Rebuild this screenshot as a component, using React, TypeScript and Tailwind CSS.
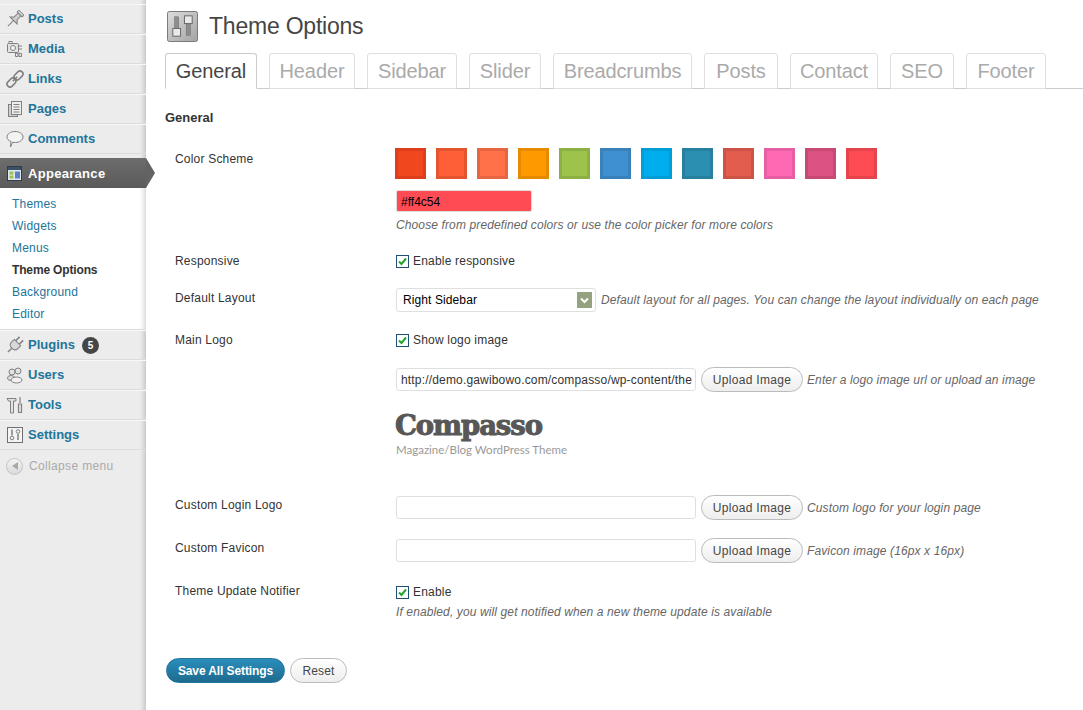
import type { ReactNode } from 'react';

const swatches = [
  ['#f1471f', '#dd3f1c'],
  ['#ff5f36', '#e4552f'],
  ['#ff7149', '#e66642'],
  ['#ff9900', '#e68a00'],
  ['#9dc34d', '#8db045'],
  ['#3f90d0', '#3981bb'],
  ['#00aeef', '#009dd7'],
  ['#2a8fb0', '#26809e'],
  ['#e35d4f', '#cc5447'],
  ['#ff69b4', '#e55fa2'],
  ['#dc5282', '#c64a75'],
  ['#ff4c54', '#e6444c'],
];

const tabs = [
  { name: 'General', w: 'w-[92px]' },
  { name: 'Header', w: 'w-[86px]' },
  { name: 'Sidebar', w: 'w-[90px]' },
  { name: 'Slider', w: 'w-[72px]' },
  { name: 'Breadcrumbs', w: 'w-[139px]' },
  { name: 'Posts', w: 'w-[74px]' },
  { name: 'Contact', w: 'w-[88px]' },
  { name: 'SEO', w: 'w-[64px]' },
  { name: 'Footer', w: 'w-[80px]' },
];

const submenu = ['Themes', 'Widgets', 'Menus', 'Theme Options', 'Background', 'Editor'];

function Glyph({ children }: { children: ReactNode }) {
  return (
    <svg width="18" height="18" viewBox="0 0 18 18" fill="#e2e2e2" stroke="#808080" strokeWidth="1">
      {children}
    </svg>
  );
}

const icons: Record<string, ReactNode> = {
  Posts: (
    <Glyph>
      <g transform="rotate(45 9 9)">
        <rect x="5.500" y="0" width="7" height="2.500" rx=".5" />
        <path d="M7 2.500v5.500l-3 3h10l-3-3V2.500z" fill="#cfcfcf" />
        <path d="M9 11v8" />
      </g>
    </Glyph>
  ),
  Media: (
    <Glyph>
      <rect x="1.500" y="3.500" width="11" height="9" rx="1" />
      <rect x="3" y="1.500" width="3" height="2" />
      <circle cx="7" cy="8" r="2.500" fill="#f4f4f4" />
      <path d="M13 6h3M13 9h3M9.500 13v3.500h2.500v-3zM13 13v3.500h2.500v-3z" fill="none" />
    </Glyph>
  ),
  Links: (
    <Glyph>
      <g transform="rotate(-45 9 9)" fill="none" strokeWidth="1.600">
        <rect x="-1" y="6" width="10" height="6" rx="3" />
        <rect x="9" y="6" width="10" height="6" rx="3" />
        <path d="M6 9h6" />
      </g>
    </Glyph>
  ),
  Pages: (
    <Glyph>
      <rect x="2.500" y="4.500" width="9" height="12" fill="#cfcfcf" />
      <rect x="5.500" y="1.500" width="10" height="13" fill="#eeeeee" />
      <path d="M7.500 4.500h6M7.500 7h6M7.500 9.500h6M7.500 12h6" />
    </Glyph>
  ),
  Comments: (
    <Glyph>
      <path d="M9 1.500c4.500 0 8 2.400 8 5.500s-3.500 5.500-7.500 5.500c-1 0-2 0-3-.3L4.500 17l.5-5.500C2.500 10.500 1 9 1 7c0-3.100 3.500-5.500 8-5.500z" fill="#f3f3f3" />
    </Glyph>
  ),
  Plugins: (
    <Glyph>
      <g transform="rotate(45 9 9)">
        <path d="M4.500 5.500h9v4c0 2.500-2 4-4.500 4s-4.500-1.500-4.500-4z" fill="#d8d8d8" />
        <path d="M6.500 5.500V0M11.500 5.500V0" strokeWidth="1.600" />
        <path d="M9 13.500V19" strokeWidth="1.400" />
      </g>
    </Glyph>
  ),
  Users: (
    <Glyph>
      <circle cx="6" cy="6" r="3" />
      <circle cx="12" cy="5" r="3" />
      <ellipse cx="5" cy="12" rx="3.500" ry="2.500" />
      <ellipse cx="10.500" cy="14" rx="5.500" ry="3" fill="#f1f1f1" />
    </Glyph>
  ),
  Tools: (
    <Glyph>
      <path d="M1 2.500h9v2.500H7.500v12h-3V5H2.500z" />
      <path d="M14 1v6M12.500 8h3v8.500h-3z" strokeWidth="1.200" />
    </Glyph>
  ),
  Settings: (
    <Glyph>
      <rect x="1.500" y="1.500" width="15" height="15" fill="#f4f4f4" stroke="#6f6f6f" />
      <path d="M6 3.500v6M12 8v6" strokeWidth="1.500" />
      <circle cx="6" cy="12" r="1.800" fill="none" />
      <circle cx="12" cy="5.500" r="1.800" fill="none" />
    </Glyph>
  ),
};

function MenuItem({ name, badge }: { name: string; badge?: string }) {
  return (
    <div className="flex h-[30px] items-center gap-[4px] border-t border-t-[#f7f7f7] border-b border-b-[#dcdcdc] pl-[6px]">
      <span className="flex w-[18px] justify-center">{icons[name]}</span>
      <span className="text-[13px] font-bold text-[#21759b]">{name}</span>
      {badge && (
        <span className="ml-[3px] flex h-[17px] w-[17px] items-center justify-center rounded-full bg-[#464646] text-[10px] font-bold text-white">
          {badge}
        </span>
      )}
    </div>
  );
}

function Sidebar() {
  return (
    <aside className="relative z-10 flex w-[146px] shrink-0 flex-col bg-[#ececec] pt-[4px] shadow-[inset_-6px_0_5px_-4px_rgba(0,0,0,0.18)]">
      {['Posts', 'Media', 'Links', 'Pages', 'Comments'].map((n) => (
        <MenuItem key={n} name={n} />
      ))}
      <div className="relative mt-[4px] flex h-[30px] items-center gap-[6px] bg-gradient-to-b from-[#6d6d6d] to-[#5a5a5a] pt-[1px] pl-[7px]">
        <svg width="15" height="15" viewBox="0 0 15 15">
          <rect x=".5" y=".5" width="14" height="14" fill="#dfe9f2" stroke="#2f3b4a" />
          <rect x="1" y="1" width="13" height="3" fill="#3a4f68" />
          <rect x="2.500" y="5.500" width="4" height="3" fill="#9dc34d" />
          <rect x="2.500" y="9.500" width="4" height="3" fill="#9dc34d" />
          <rect x="8" y="5.500" width="5" height="7" fill="#5d7fc4" />
        </svg>
        <span className="text-[13px] font-bold tracking-[0.3px] text-white">Appearance</span>
        <span className="absolute left-full top-0 h-0 w-0 border-y-[15px] border-l-[9px] border-y-transparent border-l-[#636363]" />
      </div>
      <ul className="bg-white pt-[5px] pb-[4px] shadow-[inset_-6px_0_5px_-4px_rgba(0,0,0,0.18)]">
        {submenu.map((s) => (
          <li
            key={s}
            className={`flex h-[22px] items-center pl-[12px] text-[12px] ${
              s === 'Theme Options' ? 'font-bold tracking-[-0.15px] text-[#333]' : 'tracking-[0.2px] text-[#21759b]'
            }`}
          >
            {s}
          </li>
        ))}
      </ul>
      <div className="border-t border-t-[#dcdcdc]" />
      <MenuItem name="Plugins" badge="5" />
      <MenuItem name="Users" />
      <MenuItem name="Tools" />
      <MenuItem name="Settings" />
      <div className="mt-[7px] flex items-center gap-[6px] pl-[6px]">
        <span className="flex h-[17px] w-[17px] items-center justify-center rounded-full border border-[#c4c4c4] bg-gradient-to-b from-[#f4f4f4] to-[#dadada]">
          <span className="h-0 w-0 border-y-[4px] border-r-[6px] border-y-transparent border-r-[#a9a9a9]" />
        </span>
        <span className="text-[12px] tracking-[0.35px] text-[#aaaaaa]">Collapse menu</span>
      </div>
    </aside>
  );
}

function Check({ label }: { label: string }) {
  return (
    <div className="flex items-center gap-[4px] text-[12px] tracking-[0.2px] text-[#333]">
      <span className="flex h-[13px] w-[13px] items-center justify-center border border-[#1e4f74] bg-white">
        <svg width="9" height="9" viewBox="0 0 9 9">
          <path d="M1 4.500l2.500 2.500L8 1.500" fill="none" stroke="#22a52c" strokeWidth="2" />
        </svg>
      </span>
      {label}
    </div>
  );
}

function Hint({ children }: { children: ReactNode }) {
  return <span className="text-[12px] tracking-[0.12px] whitespace-nowrap text-[#666] italic">{children}</span>;
}

function UploadField({ value, hint }: { value?: string; hint: string }) {
  return (
    <div className="flex items-center">
      <div className="flex h-[23px] w-[300px] items-center overflow-hidden rounded-[3px] border border-[#dfdfdf] bg-white pl-[4px] text-[12px] tracking-[0.17px] whitespace-nowrap text-[#333]">
        {value}
      </div>
      <div className="mr-[4px] ml-[5px] flex h-[25px] w-[102px] items-center justify-center rounded-full border border-[#bbb] bg-gradient-to-b from-white to-[#eeeeee] text-[12px] tracking-[0.3px] text-[#464646]">
        Upload Image
      </div>
      <Hint>{hint}</Hint>
    </div>
  );
}

function Row({ label, className, children }: { label: string; className: string; children: ReactNode }) {
  return (
    <div className={`flex ${className}`}>
      <div className="w-[231px] shrink-0 pl-[10px] text-[12px] leading-[16px] tracking-[0.2px] text-[#333]">{label}</div>
      <div className="min-w-0 flex-1">{children}</div>
    </div>
  );
}

export default function App() {
  return (
    <div className="flex h-[710px] w-[1083px] overflow-hidden bg-white font-['Liberation_Sans',Arial,sans-serif]">
      <Sidebar />
      <main className="flex min-w-0 flex-1 flex-col pl-[19px]">
        <div className="flex h-[53px] items-start gap-[11px] pt-[11px] pl-[2px]">
          <svg width="31" height="31" viewBox="0 0 32 32" className="shrink-0">
            <defs>
              <linearGradient id="ic" x1="0" y1="0" x2="1" y2="1">
                <stop offset="0" stopColor="#dcdcdc" />
                <stop offset="1" stopColor="#a4a4a4" />
              </linearGradient>
            </defs>
            <rect x=".5" y=".5" width="31" height="31" rx="2" fill="url(#ic)" stroke="#777" />
            <rect x="8" y="6" width="4" height="19" fill="#8d8d8d" stroke="#666" strokeWidth=".5" />
            <rect x="6" y="18" width="8" height="8" fill="#e9e9e9" stroke="#666" />
            <rect x="20" y="6" width="4" height="19" fill="#8d8d8d" stroke="#666" strokeWidth=".5" />
            <rect x="18" y="5" width="8" height="8" fill="#e9e9e9" stroke="#666" />
          </svg>
          <h1 className="pt-[1px] text-[23px] leading-[28px] tracking-[-0.22px] text-[#464646]">Theme Options</h1>
        </div>

        <div className="flex h-[36px] gap-[12px] border-b border-[#cccccc]">
          {tabs.map((t, i) => (
            <div
              key={t.name}
              className={`flex h-[36px] items-center justify-center rounded-t-[3px] border text-[20px] tracking-[-0.12px] ${t.w} ${
                i === 0 ? 'border-[#cccccc] border-b-white bg-white text-[#464646]' : 'h-[35px] border-[#dfdfdf] text-[#aaaaaa]'
              }`}
            >
              {t.name}
            </div>
          ))}
        </div>

        <h3 className="mt-[21px] mb-[25px] text-[13px] leading-[16px] font-bold text-[#333]">General</h3>

        <Row label="Color Scheme" className="h-[102px]">
          <div className="-mt-[3px] -ml-[1px] flex gap-[10px]">
            {swatches.map(([fill, edge]) => (
              <span
                key={fill}
                className="h-[31px] w-[31px] border-[3px]"
                style={{ backgroundColor: fill, borderColor: edge }}
              />
            ))}
          </div>
          <div className="mt-[11px] flex h-[22px] w-[136px] items-center rounded-[2px] border border-[#dfdfdf] bg-[#ff4c54] pt-[1px] pl-[4px] text-[12px] text-black">
            #ff4c54
          </div>
          <div className="mt-[4px] leading-[16px]">
            <Hint>Choose from predefined colors or use the color picker for more colors</Hint>
          </div>
        </Row>

        <Row label="Responsive" className="h-[37px]">
          <div className="-mt-[1px]">
            <Check label="Enable responsive" />
          </div>
        </Row>

        <Row label="Default Layout" className="h-[42px]">
          <div className="-mt-[2px] flex items-center gap-[5px]">
            <div className="flex h-[24px] w-[200px] items-center justify-between rounded-[3px] border border-[#dfdfdf] bg-white pr-[3px] pl-[6px] text-[12px] tracking-[0.1px] text-black">
              Right Sidebar
              <span className="flex h-[16px] w-[15px] items-center justify-center bg-[#94a27f]">
                <svg width="9" height="7" viewBox="0 0 9 7">
                  <path d="M1 1.500l3.500 3.500L8 1.500" fill="none" stroke="#fff" strokeWidth="2" />
                </svg>
              </span>
            </div>
            <Hint>Default layout for all pages. You can change the layout individually on each page</Hint>
          </div>
        </Row>

        <Row label="Main Logo" className="h-[165px]">
          <div className="-mt-[1px]">
            <Check label="Show logo image" />
          </div>
          <div className="mt-[18px]">
            <UploadField
              value="http://demo.gawibowo.com/compasso/wp-content/the"
              hint="Enter a logo image url or upload an image"
            />
          </div>
          <div className="mt-[18px] -ml-[1px] font-['DejaVu_Serif',serif] text-[27.5px] leading-[30px] font-bold tracking-[-1.1px] text-[#575757] [-webkit-text-stroke:1px_#575757]">
            Compasso
          </div>
          <div className="mt-[2px] font-['Lato',sans-serif] text-[11.5px] leading-[16px] text-[#999]">
            Magazine/Blog WordPress Theme
          </div>
        </Row>

        <Row label="Custom Login Logo" className="h-[43px]">
          <div className="-mt-[2px]">
            <UploadField hint="Custom logo for your login page" />
          </div>
        </Row>

        <Row label="Custom Favicon" className="h-[43px]">
          <div className="-mt-[2px]">
            <UploadField hint="Favicon image (16px x 16px)" />
          </div>
        </Row>

        <Row label="Theme Update Notifier" className="h-[75px]">
          <Check label="Enable" />
          <div className="mt-[2px] leading-[16px]">
            <Hint>If enabled, you will get notified when a new theme update is available</Hint>
          </div>
        </Row>

        <div className="flex items-center gap-[5px] pl-[1px]">
          <div className="flex h-[25px] w-[119px] items-center justify-center rounded-full border border-[#21759b] bg-gradient-to-b from-[#2a8ebb] to-[#1e6a8f] text-[12px] font-bold tracking-[-0.1px] text-white">
            Save All Settings
          </div>
          <div className="flex h-[25px] w-[57px] items-center justify-center rounded-full border border-[#bbb] bg-gradient-to-b from-white to-[#eeeeee] text-[12px] tracking-[0.1px] text-[#464646]">
            Reset
          </div>
        </div>
      </main>
    </div>
  );
}
